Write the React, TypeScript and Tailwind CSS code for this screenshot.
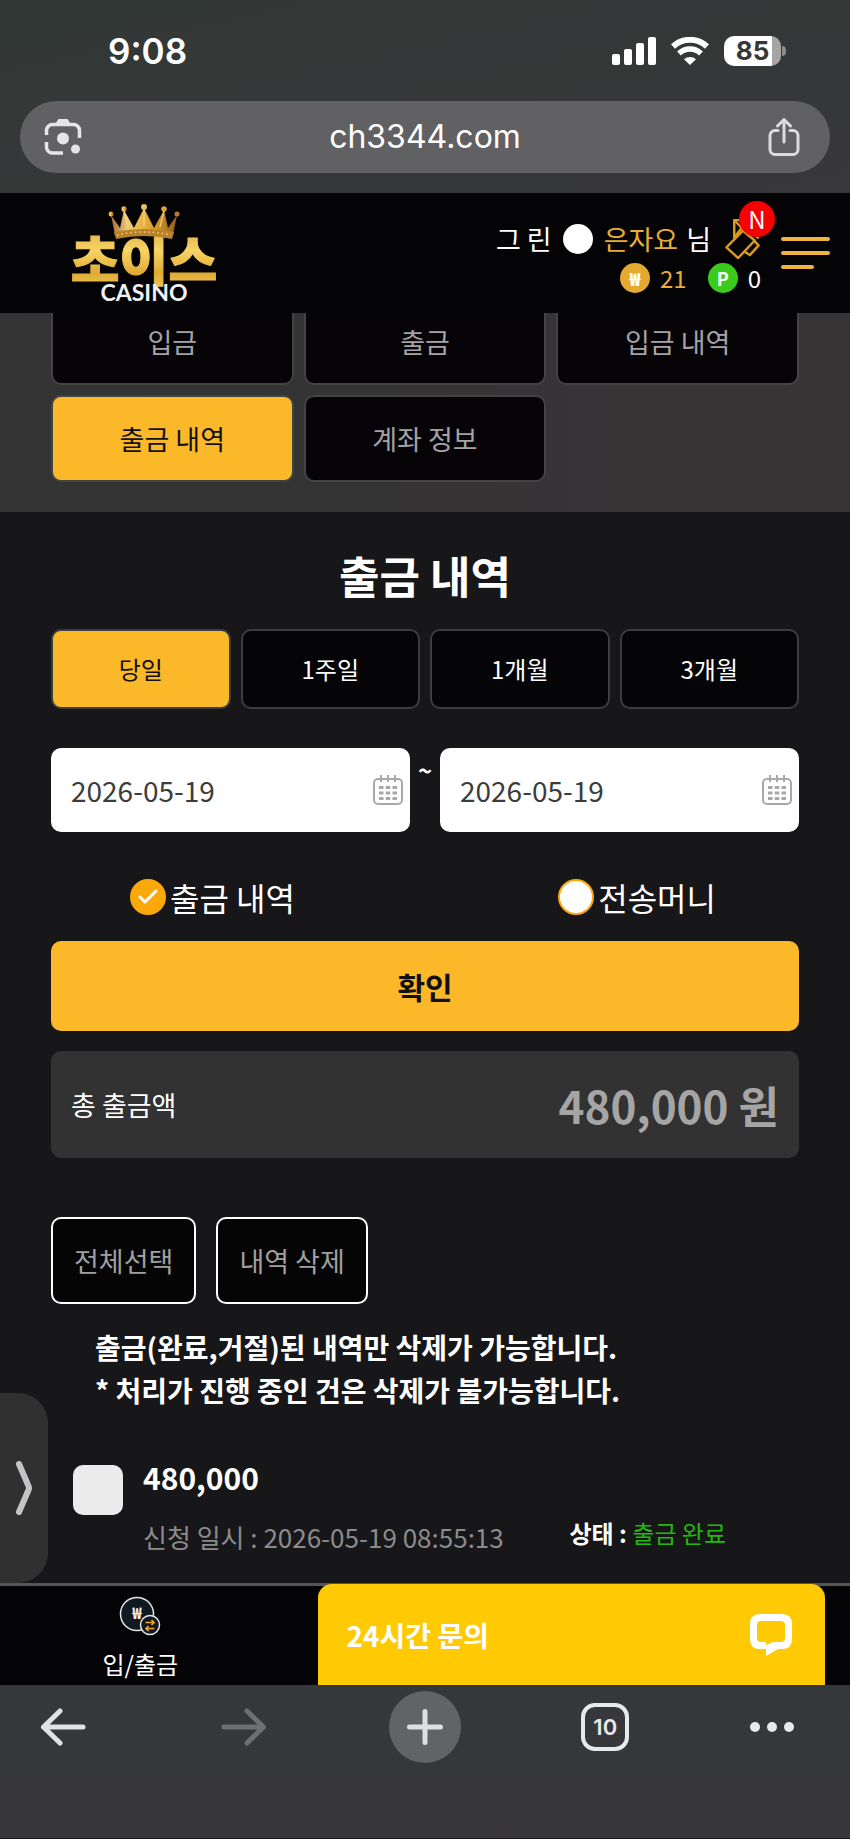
import { useState } from "react";
import { Check } from "lucide-react";

const menus = ["입금", "출금", "입금 내역", "출금 내역", "계좌 정보"];
const periods = ["당일", "1주일", "1개월", "3개월"];
const kinds = ["출금 내역", "전송머니"];

function StatusBar() {
  return (
    <div className="flex h-[101px] items-center justify-between pl-[108px] pr-[64px] font-['Inter',sans-serif]">
      <span className="text-[35px] leading-10 font-semibold">9:08</span>
      <div className="flex items-center gap-[15px]">
        <svg width="44" height="28" viewBox="0 0 44 28" fill="#fff">
          <rect x="0" y="17" width="8" height="11" rx="2" />
          <rect x="12" y="12" width="8" height="16" rx="2" />
          <rect x="24" y="6" width="8" height="22" rx="2" />
          <rect x="36" y="0" width="8" height="28" rx="2" />
        </svg>
        <svg width="38" height="28" viewBox="0 0 38 28" fill="none">
          <path d="M2 9.500A25 25 0 0 1 36 9.500" stroke="#fff" strokeWidth="6" />
          <path d="M8 16.500A16 16 0 0 1 30 16.500" stroke="#fff" strokeWidth="5.500" />
          <path d="M13 22.200A9 9 0 0 1 25 22.200L19 28Z" fill="#fff" />
        </svg>
        <div className="flex items-center gap-px">
          <div className="flex h-[30px] w-[57px] items-center justify-center rounded-[10px] bg-linear-to-r from-white from-85% to-[#a5a5a5] to-85%">
            <span className="text-[26px] leading-7 font-bold text-[#353738]">85</span>
          </div>
          <span className="h-2.5 w-1 rounded-r-full bg-[#8b8b8b]" />
        </div>
      </div>
    </div>
  );
}

function AddressBar() {
  return (
    <div className="mx-5 flex h-[72px] items-center rounded-full bg-[#616163] px-[24px]">
      <button aria-label="Lens">
        <svg width="38" height="38" viewBox="0 0 38 38" fill="none" stroke="#e4e6e6" strokeWidth="3.500">
          <path d="M2.500 17V12.500A6 6 0 0 1 8.500 6.500H29.500A6 6 0 0 1 35.500 12.500V20" />
          <path d="M2.500 24V29A6 6 0 0 0 8.500 35H19" />
          <path d="M12 6L14.500 1.500H23.500L26 6Z" fill="#e4e6e6" strokeWidth="1" />
          <circle cx="19" cy="20.500" r="6" fill="#e4e6e6" stroke="none" />
          <circle cx="31.500" cy="31" r="4.500" fill="#e4e6e6" stroke="none" />
        </svg>
      </button>
      <input
        aria-label="Address"
        defaultValue="ch3344.com"
        className="min-w-0 flex-1 bg-transparent text-center font-['Inter',sans-serif] text-[32px] leading-10 text-white outline-none"
      />
      <button aria-label="Share" className="mr-1.5">
        <svg width="32" height="40" viewBox="0 0 32 40" fill="none" stroke="#dcdcdc" strokeWidth="3" strokeLinecap="round" strokeLinejoin="round">
          <path d="M10 13.500H7A5 5 0 0 0 2 18.500V32.500A5 5 0 0 0 7 37.500H25A5 5 0 0 0 30 32.500V18.500A5 5 0 0 0 25 13.500H22" />
          <path d="M16 25V2.500M9.500 9L16 2.500L22.500 9" />
        </svg>
      </button>
    </div>
  );
}

function Logo() {
  return (
    <svg width="148" height="108" viewBox="0 -7 148 108" role="img" aria-label="초이스 CASINO" overflow="visible">
      <defs>
        <linearGradient id="gold" x1="0" y1="0" x2="0" y2="1">
          <stop offset="0" stopColor="#d8a33a" />
          <stop offset="0.400" stopColor="#f7d465" />
          <stop offset="0.700" stopColor="#e0ab33" />
          <stop offset="1" stopColor="#f4d06a" />
        </linearGradient>
        <linearGradient id="crown" x1="0" y1="0" x2="1" y2="0">
          <stop offset="0" stopColor="#a66c3a" />
          <stop offset="0.250" stopColor="#efc977" />
          <stop offset="0.500" stopColor="#e8b23f" />
          <stop offset="0.750" stopColor="#c98f22" />
          <stop offset="1" stopColor="#8f5a1c" />
        </linearGradient>
      </defs>
      <text x="73" y="75" textAnchor="middle" fontSize="53" fontWeight="900" fill="url(#gold)" stroke="url(#gold)" strokeWidth="1" fontFamily="'Noto Sans CJK KR', sans-serif">
        초이스
      </text>
      <g fill="url(#crown)">
        <path d="M44 29L40 9L49 22L53 4L63 22L73 2L83 22L93 4L97 22L106 9L102 29Q73 25 44 29Z" />
        <path d="M43 26Q73 20 103 26L101 33Q73 27 45 33Z" fill="#b98228" />
        <circle cx="40" cy="8" r="2.500" />
        <circle cx="53" cy="3" r="2.800" />
        <circle cx="73" cy="1" r="3" fill="#eac060" />
        <circle cx="93" cy="3" r="2.800" fill="#d9a23b" />
        <circle cx="106" cy="8" r="2.500" fill="#b77b2d" />
      </g>
      <path d="M46 29Q73 23 100 29" stroke="#f0cf8a" strokeWidth="1.500" strokeDasharray="1.500 3" fill="none" />
      <path d="M53 5L57 21M93 5L89 21M73 4V20" stroke="#f6dc93" strokeWidth="1.500" fill="none" opacity="0.700" />
      <text x="73" y="95" textAnchor="middle" fontSize="23" fontWeight="700" fill="#f1f1f3" fontFamily="Lato, sans-serif">
        CASINO
      </text>
    </svg>
  );
}

function Header() {
  return (
    <header className="relative z-10 flex h-[120px] items-center justify-between bg-[#040406] pl-[71px] pr-5">
      <a href="#">
        <Logo />
      </a>
      <div className="flex items-center gap-5">
        <div className="flex flex-col items-end gap-1 pt-1.5 text-[27px] leading-9">
          <div className="flex items-center">
            <span>그 린</span>
            <span className="mx-[11px] size-[30px] rounded-full bg-white" />
            <span className="text-[#e9ad33]">은자요</span>
            <span className="ml-2">님</span>
            <a href="#" aria-label="쿠폰" className="relative ml-3.5">
              <svg width="36" height="40" viewBox="-1 -1 36 41" fill="none" stroke="#d99a1c" strokeWidth="2.500" strokeLinejoin="round">
                <path d="M0 28L12 39L29 21L17 11Z" />
                <path d="M8 20V0H14L33 19" />
                <path d="M8 0L22 15M8 18L19 4" />
                <path d="M18 32L24 36L33 26L28 21" />
              </svg>
              <span className="absolute -top-[18px] -right-3.5 flex size-9 items-center justify-center rounded-full bg-[#f60000] text-[24px] leading-9">
                N
              </span>
            </a>
          </div>
          <div className="flex h-[30px] items-center text-[24px]">
            <span className="flex size-[30px] items-center justify-center rounded-full bg-[#e6a92f] text-lg font-black">₩</span>
            <span className="ml-2.5 text-[#e9ad33]">21</span>
            <span className="ml-[21px] flex size-[30px] items-center justify-center rounded-full bg-[#3bcb1c] text-lg font-bold">P</span>
            <span className="ml-2.5">0</span>
          </div>
        </div>
        <button aria-label="메뉴" className="flex w-[49px] flex-col gap-2.5">
          <span className="h-1 w-full rounded-full bg-[#efb43c]" />
          <span className="h-1 w-full rounded-full bg-[#efb43c]" />
          <span className="h-1 w-2/3 rounded-full bg-[#efb43c]" />
        </button>
      </div>
    </header>
  );
}

function CalendarIcon() {
  return (
    <svg width="30" height="32" viewBox="0 0 30 32" fill="none" stroke="#a9a7aa" strokeWidth="2">
      <rect x="1" y="5" width="28" height="25" rx="4" />
      <path d="M8 1V8M15 1V8M22 1V8" />
      <path d="M6 13.500H24M6 19H24M6 24.500H24" strokeWidth="3" strokeDasharray="4.500 2.250" />
    </svg>
  );
}

function DateField({ label }: { label: string }) {
  return (
    <label className="flex h-[84px] min-w-0 flex-1 items-center rounded-[10px] bg-white pr-[7px] pl-5">
      <input
        aria-label={label}
        defaultValue="2026-05-19"
        className="min-w-0 flex-1 bg-transparent text-[28px] leading-10 text-[#3c3c3c] outline-none"
      />
      <CalendarIcon />
    </label>
  );
}

function BottomMenu() {
  return (
    <div className="flex h-[102px] border-t-[3px] border-[#555557] bg-[#040407] pr-[25px]">
      <a href="#" className="flex w-[34%] flex-col items-center gap-2.5 pt-2.5 text-[24px] leading-9">
        <svg width="42" height="40" viewBox="0 0 42 40" fill="none">
          <circle cx="18" cy="18" r="16.500" fill="#101820" stroke="#e4e6ea" strokeWidth="1.500" />
          <text x="18" y="23" textAnchor="middle" fontSize="16" fontWeight="700" fill="#f0f2f6" fontFamily="'Noto Sans CJK KR', sans-serif">
            ₩
          </text>
          <circle cx="31" cy="29" r="9.500" fill="#101820" stroke="#e4e6ea" strokeWidth="1.500" />
          <path d="M26.500 26.500H35M32.500 24L35 26.500L32.500 29M35.500 32.500H27M29.500 30L27 32.500L29.500 35" stroke="#f0a91f" strokeWidth="1.700" />
        </svg>
        <span>입/출금</span>
      </a>
      <button className="-mt-0.5 ml-[37px] flex flex-1 items-center justify-between rounded-t-[14px] bg-[#ffca04] pr-[33px] pl-[29px] text-[28px] leading-9 font-bold">
        <span>24시간 문의</span>
        <svg width="42" height="42" viewBox="0 0 42 42">
          <path
            fill="#fff"
            fillRule="evenodd"
            d="M10 0H32Q42 0 42 10V25Q42 35 32 35H28L16 42V35H10Q0 35 0 25V10Q0 0 10 0ZM11 7Q7 7 7 11V24Q7 28 11 28H16V31L23 28H31Q35 28 35 24V11Q35 7 31 7Z"
          />
        </svg>
      </button>
    </div>
  );
}

function BrowserBar() {
  return (
    <nav className="h-[153px] bg-linear-to-b from-[#35383a] to-[#38363a] pt-[6px] pr-14 pl-[27px]">
      <div className="flex items-center justify-between">
        <button aria-label="Back" className="flex size-[72px] items-center justify-center">
          <svg width="46" height="38" viewBox="0 0 46 38" fill="none" stroke="#e2e2e4" strokeWidth="5" strokeLinecap="round" strokeLinejoin="round">
            <path d="M43 19H3.500M20 3L3.500 19L20 35" />
          </svg>
        </button>
        <button aria-label="Forward" className="flex size-[72px] items-center justify-center">
          <svg width="46" height="38" viewBox="0 0 46 38" fill="none" stroke="#6f6f73" strokeWidth="5" strokeLinecap="round" strokeLinejoin="round">
            <path d="M3 19H42.500M26 3L42.500 19L26 35" />
          </svg>
        </button>
        <button aria-label="New tab" className="flex size-[72px] items-center justify-center rounded-full bg-[#616366]">
          <svg width="36" height="36" viewBox="0 0 36 36" stroke="#dedfe2" strokeWidth="5" strokeLinecap="round">
            <path d="M18 2.500V33.500M2.500 18H33.500" />
          </svg>
        </button>
        <button aria-label="Tabs" className="flex size-[72px] items-center justify-center">
          <span className="flex size-12 items-center justify-center rounded-[14px] border-4 border-[#e8e9ec] font-['Inter',sans-serif] text-[22px] leading-8 font-semibold text-[#e8e9ec]">
            10
          </span>
        </button>
        <button aria-label="More">
          <svg width="44" height="10" viewBox="0 0 44 10" fill="#e8e9ec">
            <circle cx="5" cy="5" r="5" />
            <circle cx="22" cy="5" r="5" />
            <circle cx="39" cy="5" r="5" />
          </svg>
        </button>
      </div>
    </nav>
  );
}

export default function App() {
  const [menu, setMenu] = useState("출금 내역");
  const [period, setPeriod] = useState("당일");
  const [kind, setKind] = useState("출금 내역");

  return (
    <div className="min-h-screen bg-[#171717] font-['Noto_Sans_CJK_KR',sans-serif] text-white">
      <div className="bg-linear-to-br from-[#323835] to-[#38373a] pb-5">
        <StatusBar />
        <AddressBar />
      </div>
      <Header />

      <nav className="overflow-hidden bg-linear-to-r from-[#333333] to-[#373436] px-[51px] pb-[30px]">
        <div className="-mt-[15px] grid grid-cols-3 gap-2.5">
          {menus.map((item) => (
            <button
              key={item}
              onClick={() => setMenu(item)}
              className={`h-[87px] rounded-[10px] border-2 border-[#434244] text-[27px] leading-10 ${
                menu === item ? "bg-[#fbb829] text-[#111111]" : "bg-[#060407] text-[#a5a3a6]"
              }`}
            >
              {item}
            </button>
          ))}
        </div>
      </nav>

      <main className="relative bg-[#171618] px-[51px] pt-[31px] pb-[26px]">
        <h1 className="text-center text-[44px] leading-[64px] font-bold">출금 내역</h1>

        <div className="mt-[22px] grid grid-cols-4 gap-2.5">
          {periods.map((item) => (
            <button
              key={item}
              onClick={() => setPeriod(item)}
              className={`h-20 rounded-[10px] border-2 border-[#3d3c3e] text-[24px] leading-9 ${
                period === item ? "bg-[#fbb829] text-[#111111]" : "bg-[#050406]"
              }`}
            >
              {item}
            </button>
          ))}
        </div>

        <div className="mt-[39px] flex">
          <DateField label="시작일" />
          <span className="w-[30px] pt-1 text-center text-[24px] leading-9 font-bold">~</span>
          <DateField label="종료일" />
        </div>

        <div className="mt-[43px] flex">
          {kinds.map((item) => (
            <label key={item} className="flex h-11 flex-1 items-center pl-[79px] text-[32px] leading-[44px] last:flex-none last:pr-[83px] last:pl-0">
              <span className="relative mr-1 flex">
                <input
                  type="radio"
                  name="kind"
                  checked={kind === item}
                  onChange={() => setKind(item)}
                  className="size-9 appearance-none rounded-full border-2 border-[#fba90a] bg-white checked:bg-[#fba90a]"
                />
                {kind === item && <Check className="pointer-events-none absolute top-1.5 left-1.5" size={24} strokeWidth={3} />}
              </span>
              {item}
            </label>
          ))}
        </div>

        <button className="mt-[22px] h-[90px] w-full rounded-[10px] bg-[#fbb829] text-[30px] leading-[44px] font-bold text-[#111111]">
          확인
        </button>

        <div className="mt-5 flex h-[107px] items-center justify-between rounded-[10px] bg-[#323232] px-5">
          <span className="text-[27px] leading-10">총 출금액</span>
          <span className="text-[44px] leading-[64px] font-bold text-[#a5a5a5]">480,000 원</span>
        </div>

        <div className="mt-[59px] flex gap-5">
          <button className="h-[87px] rounded-[10px] border-2 border-white bg-[#050505] px-[21px] text-[27px] leading-10 text-[#a0a0a0]">
            전체선택
          </button>
          <button className="h-[87px] rounded-[10px] border-2 border-white bg-[#050505] px-[21px] text-[27px] leading-10 text-[#a0a0a0]">
            내역 삭제
          </button>
        </div>

        <p className="mt-[22px] pl-11 text-[28px] leading-[43px] font-bold">
          출금(완료,거절)된 내역만 삭제가 가능합니다.
          <br />* 처리가 진행 중인 건은 삭제가 불가능합니다.
        </p>

        <div className="mt-[42px] flex gap-5 pl-[22px]">
          <input
            type="checkbox"
            aria-label="480,000"
            className="mt-[11px] size-[50px] shrink-0 appearance-none rounded-[10px] bg-[#ebebec] checked:bg-[#fbb829]"
          />
          <div className="flex-1">
            <div className="text-[30px] leading-[46px] font-bold">480,000</div>
            <div className="mt-[17px] flex items-start justify-between pr-[73px]">
              <span className="text-[26px] leading-10 text-[#8b8b8c]">신청 일시 : 2026-05-19 08:55:13</span>
              <span className="text-[24px] leading-8">
                <b>상태 :</b> <span className="text-[#22b80e]">출금 완료</span>
              </span>
            </div>
          </div>
        </div>

        <button
          aria-label="열기"
          className="absolute bottom-0 left-0 flex h-[190px] w-12 items-center justify-center rounded-r-[30px] bg-[#303031]"
        >
          <svg width="18" height="54" viewBox="0 0 18 54" fill="none" stroke="#c4c3c6" strokeWidth="6" strokeLinecap="round" strokeLinejoin="round">
            <path d="M4 3L13.500 25Q14.500 27 13.500 29L4 51" />
          </svg>
        </button>
      </main>

      <BottomMenu />
      <BrowserBar />
    </div>
  );
}
